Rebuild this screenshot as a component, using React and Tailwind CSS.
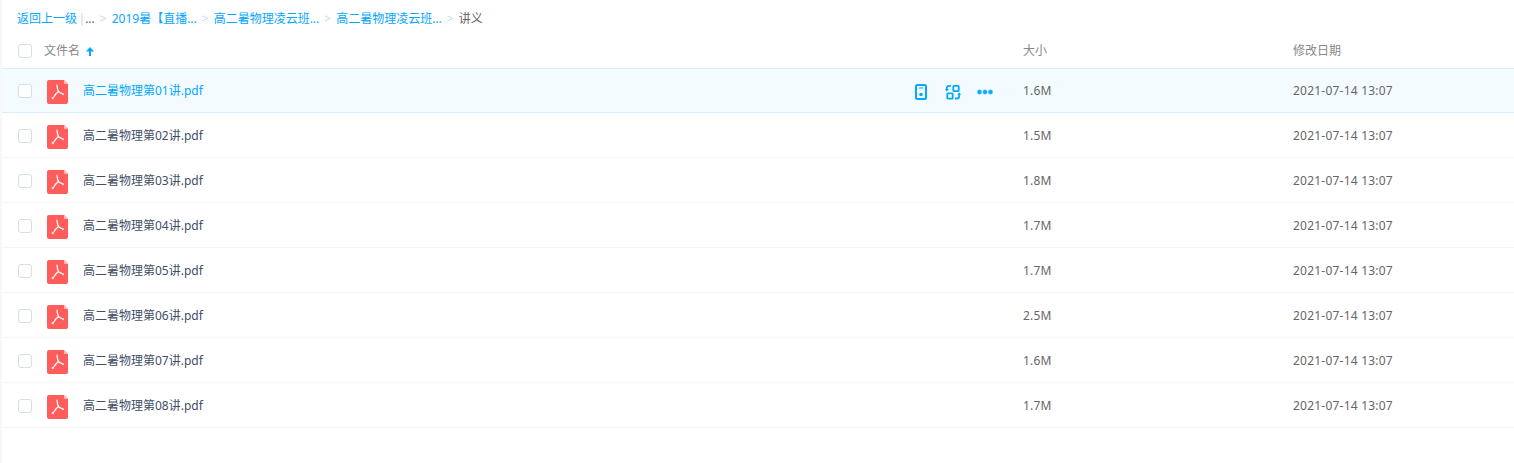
import { Fragment } from "react";

const files = [
  { name: "高二暑物理第01讲.pdf", size: "1.6M" },
  { name: "高二暑物理第02讲.pdf", size: "1.5M" },
  { name: "高二暑物理第03讲.pdf", size: "1.8M" },
  { name: "高二暑物理第04讲.pdf", size: "1.7M" },
  { name: "高二暑物理第05讲.pdf", size: "1.7M" },
  { name: "高二暑物理第06讲.pdf", size: "2.5M" },
  { name: "高二暑物理第07讲.pdf", size: "1.6M" },
  { name: "高二暑物理第08讲.pdf", size: "1.7M" },
];

const crumbs = ["...", "2019暑【直播...", "高二暑物理凌云班...", "高二暑物理凌云班..."];

const Checkbox = () => (
  <span className="block size-[14px] border border-[#d5dde8] rounded-[3px] bg-white" />
);

const PdfIcon = () => (
  <svg width="21" height="24" viewBox="0 0 21 24" className="block">
    <path d="M2 0H17L21 4V22a2 2 0 0 1-2 2H2a2 2 0 0 1-2-2V2a2 2 0 0 1 2-2Z" fill="#ff5c5c" />
    <path d="M17 0L21 4H18a1 1 0 0 1-1-1Z" fill="#ffbcbc" />
    <path
      d="M10 5c.1 2.500 1 6 2 7.200M11.500 11.500c-1.500 1.200-3.500 3-4 4.500L6 18M11.500 11.800c1.300.8 2.800 1.700 4.500 2.200"
      fill="none"
      stroke="#fff"
      strokeWidth="1.200"
      strokeLinecap="round"
    />
    <circle cx="5.800" cy="18" r="1.200" fill="#ffdcdc" />
    <circle cx="16" cy="14.200" r="1" fill="#ffdcdc" />
  </svg>
);

const Actions = () => (
  <div className="flex items-center gap-[16px] mt-[3px] text-[#06a7ff]">
    <svg width="16" height="16" viewBox="0 0 16 16" fill="none">
      <rect x="3" y="1" width="10" height="14" rx="1.500" stroke="currentColor" strokeWidth="2" />
      <path d="M6 4h4" stroke="currentColor" strokeWidth="1" />
      <circle cx="8" cy="10.500" r="1.800" fill="currentColor" />
    </svg>
    <svg width="16" height="16" viewBox="0 0 16 16" fill="none" stroke="currentColor" strokeWidth="1.800">
      <rect x="8.300" y="1.800" width="5.400" height="5.400" rx="0.600" />
      <rect x="2.300" y="9.300" width="5.400" height="5.400" rx="0.600" />
      <path d="M6 1.800H4a2.200 2.200 0 0 0-2.200 2.200v2.500M.8 4.800l1 1.500 1.200-1.500" />
      <path d="M10 14.500h2a2.200 2.200 0 0 0 2.200-2.200V9.800M13 11.200l1.200-1.500 1 1.500" />
    </svg>
    <svg width="16" height="16" viewBox="0 0 16 16" fill="currentColor" stroke="#7fd0ff" strokeWidth="0.600">
      <circle cx="2.500" cy="8" r="2.300" />
      <circle cx="8" cy="8" r="2.300" />
      <circle cx="13.500" cy="8" r="2.300" />
    </svg>
  </div>
);

const Row = ({ file, active }) => (
  <div
    className={`flex items-center h-[45px] border-y ${
      active
        ? "bg-[#f4fbff] border-[#daeefe]"
        : "bg-white border-t-transparent border-b-[#f5f6fa]"
    }`}
  >
    <div className="w-[45px] pl-[16px] shrink-0">
      <Checkbox />
    </div>
    <div className="w-[36px] shrink-0 mt-[2px]">
      <PdfIcon />
    </div>
    <div
      className={`w-[830px] shrink-0 text-xs truncate ${active ? "text-[#06a7ff]" : "text-[#424e67]"}`}
    >
      {file.name}
    </div>
    <div className="w-[110px] shrink-0">{active && <Actions />}</div>
    <div className="w-[270px] shrink-0 text-xs text-[#666] tracking-[0.2px]">{file.size}</div>
    <div className="text-xs text-[#666] tracking-[0.22px]">2021-07-14 13:07</div>
  </div>
);

export default function App() {
  return (
    <div
      className="h-[463px] bg-[#f8f8f8] pl-[2px] overflow-hidden"
      style={{ fontFamily: '"Noto Sans", "Noto Sans CJK SC", sans-serif' }}
    >
      <div className="h-full bg-white">
        {/* Breadcrumb */}
        <div className="flex items-center h-[37px] pl-[15px] text-xs text-[#06a7ff] whitespace-nowrap">
          <span>返回上一级</span>
          <span className="ml-[1.5px] mr-[0px] text-[#c4d8f4]">|</span>
          {crumbs.map((c, i) => (
            <Fragment key={i}>
              <span className={i === 0 ? "text-[#666]" : ""}>{c}</span>
              <span className="mx-[5px] text-[#c4d8f4]">&gt;</span>
            </Fragment>
          ))}
          <span className="text-[#666]">讲义</span>
        </div>

        {/* Header */}
        <div className="flex items-center h-[31px] pb-[3px] text-xs text-[#888]">
          <div className="w-[42px] pl-[16px] shrink-0">
            <Checkbox />
          </div>
          <div className="w-[979px] shrink-0 flex items-center gap-[6px]">
            文件名
            <svg width="8" height="9" viewBox="0 0 8 9" fill="none" stroke="#06a7ff" strokeWidth="2">
              <path d="M4 9V3" />
              <path d="M4 0 8 4.500H0Z" fill="#06a7ff" stroke="none" />
            </svg>
          </div>
          <div className="w-[270px] shrink-0">大小</div>
          <div>修改日期</div>
        </div>

        {files.map((f, i) => (
          <Row key={f.name} file={f} active={i === 0} />
        ))}
      </div>
    </div>
  );
}
